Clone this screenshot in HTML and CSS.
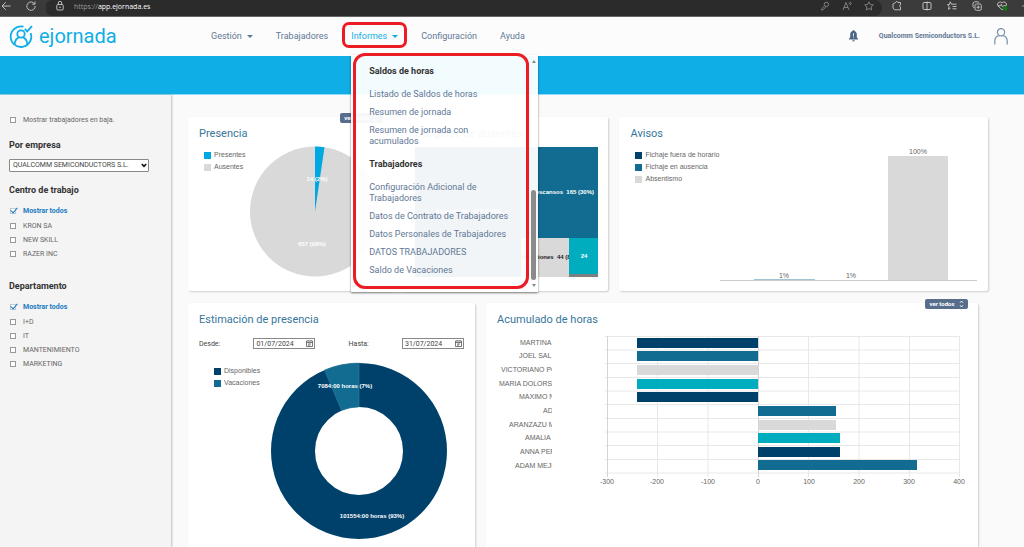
FILE: index.html
```html
<!DOCTYPE html>
<html lang="es">
<head>
<meta charset="utf-8">
<title>ejornada</title>
<link rel="stylesheet" href="styles.css">
</head>
<body>
<div class="browser">
  <div class="browser-nav">
    <svg width="10" height="10" viewBox="0 0 10 10" class="line"><path d="M9.5 5H1M4.8 1.2 1 5l3.8 3.8"/></svg>
    <svg width="10" height="10" viewBox="0 0 10 10" class="line"><path d="M8.6 3A4.2 4.2 0 1 0 9.2 5M9 .5V3.200H6.300"/></svg>
  </div>
  <div class="address">
    <svg width="8" height="10" viewBox="0 0 8 10" class="line"><rect x=".8" y="3.500" width="6.400" height="5.500" rx="1"/><path d="M2.300 3.500V2a1.700 1.700 0 0 1 3.400 0v1.500"/><circle cx="4" cy="6.200" r=".4"/></svg>
    <span class="url"><span class="scheme">https://</span>app.ejornada.es</span>
    <span class="address-icons">
      <svg width="10" height="10" viewBox="0 0 10 10" class="line dim"><path d="M4.300 5.300 1.500 8v1h1.300l3-3"/><circle cx="6.400" cy="3.400" r="2.200"/></svg>
      <svg width="10" height="10" viewBox="0 0 10 10" class="line dim"><path d="M1 9 4 1.500 7 9M2 6.500h4M7 1.500q1 1 0 2M8.300.6q1.600 1.900 0 3.600"/></svg>
      <svg width="10" height="10" viewBox="0 0 10 10" class="line dim"><path d="m5 .8 1.300 2.700 3 .4-2.200 2 .6 3L5 7.500 2.300 8.900l.6-3-2.200-2 3-.4z"/></svg>
    </span>
  </div>
  <div class="browser-tools">
    <svg width="10" height="10" viewBox="0 0 10 10" class="line"><path d="M3.500 1.500a1.300 1.300 0 0 1 2.500 0h2.500v2.300a1.200 1.200 0 0 0 0 2.300V8.800H2.500L1 7V3z"/></svg>
    <span class="tool-sep"></span>
    <svg width="10" height="10" viewBox="0 0 10 10" class="line"><rect x="1" y="1.500" width="8" height="7" rx="1"/><path d="M5 .5v9"/></svg>
    <svg width="10" height="10" viewBox="0 0 10 10" class="line"><path d="M6 3.200 4.300 3.200 3.300.8 2.500 3.400.4 3.600l1.700 1.700-.6 3 2-1.200M6 3.200h3.500M5.500 5.500h4M5.500 7.800h4"/></svg>
    <svg width="10" height="10" viewBox="0 0 10 10" class="line"><rect x="3" y="3" width="6.300" height="6.300" rx="1.500"/><path d="M2.200 7.200 1 5.500V2L2.500.8H6l1.300 1M6.200 4.500v3.300M4.500 6.200h3.400"/></svg>
    <svg width="10" height="10" viewBox="0 0 10 10" class="line"><path d="M5 8.800 1 4.900A2.200 2.200 0 0 1 5 2a2.200 2.200 0 0 1 4 2.900zM.8 4.800h2.400l1-1.500 1.300 2.500.8-1h2.500"/><circle cx="8" cy="7.300" r="2.400" class="ok-dot"/></svg>
    <svg width="8" height="10" viewBox="0 0 8 10" class="solid"><circle cx="1" cy="5" r=".7"/><circle cx="4" cy="5" r=".7"/><circle cx="7" cy="5" r=".7"/></svg>
  </div>
</div>

<header class="header">
  <a class="logo" href="#">
    <svg width="24" height="24" viewBox="0 0 24 24" class="logo-mark"><path d="M14.500 2.700A10.300 10.300 0 1 0 21.600 9"/><circle cx="12" cy="10" r="3.700"/><path d="M5.600 20.300c.4-3.800 2-5.900 4.200-6.900M18.400 20.300c-.4-3.800-2-5.900-4.200-6.900"/><path d="m15.800 5 2.400 2.400L23 2.200"/></svg>
    <span>ejornada</span>
  </a>
  <nav class="nav">
    <div class="nav-item"><a href="#">Gestión <i class="caret"></i></a></div>
    <div class="nav-item"><a href="#">Trabajadores</a></div>
    <div class="nav-item active">
      <a href="#">Informes <i class="caret"></i></a>
      <span class="mark"></span>
      <div class="menu">
        <div class="menu-body">
          <h3>Saldos de horas</h3>
          <ul>
            <li><a href="#">Listado de Saldos de horas</a></li>
            <li><a href="#">Resumen de jornada</a></li>
            <li><a href="#">Resumen de jornada con<br>acumulados</a></li>
          </ul>
          <h3>Trabajadores</h3>
          <ul>
            <li><a href="#">Configuración Adicional de<br>Trabajadores</a></li>
            <li><a href="#">Datos de Contrato de Trabajadores</a></li>
            <li><a href="#">Datos Personales de Trabajadores</a></li>
            <li><a href="#">DATOS TRABAJADORES</a></li>
            <li><a href="#">Saldo de Vacaciones</a></li>
          </ul>
        </div>
        <div class="scroll"><i class="arrow up"></i><i class="track"><b class="thumb"></b></i><i class="arrow down"></i></div>
        <span class="mark menu-mark"></span>
      </div>
    </div>
    <div class="nav-item"><a href="#">Configuración</a></div>
    <div class="nav-item"><a href="#">Ayuda</a></div>
  </nav>
  <div class="account">
    <svg width="9" height="12" viewBox="0 0 9 12" class="bell"><path d="M4.500 0a.9.9 0 0 1 .9.900C7 1.300 7.800 2.600 7.800 4.300v3L9 8.800v.7H0v-.7l1.200-1.500v-3c0-1.700.8-3 2.400-3.400A.9.9 0 0 1 4.500 0zM3.300 10.200h2.400a1.200 1.200 0 0 1-2.400 0z"/><path class="bell-in" d="M4.100 3.200h.9v2.600h-.9zM4.100 6.600h.9v.9h-.9z"/></svg>
    <span class="company">Qualcomm Semiconductors S.L.</span>
    <svg width="14" height="17" viewBox="0 0 14 17" class="user"><circle cx="7" cy="4.300" r="3.600"/><path d="M.8 16.500v-3C.8 10 3 8 5.200 7.700M13.200 16.500v-3c0-3.500-2.200-5.500-4.400-5.800"/></svg>
  </div>
</header>
<div class="band"></div>

<div class="page">
  <aside class="sidebar">
    <label class="check"><input type="checkbox">Mostrar trabajadores en baja.</label>
    <h2><label for="empresa">Por empresa</label></h2>
    <div class="select"><select id="empresa"><option>QUALCOMM SEMICONDUCTORS S.L.</option></select><svg width="6" height="5" viewBox="0 0 6 5"><path d="m.8 1 2.200 2.300L5.200 1"/></svg></div>
    <h2>Centro de trabajo</h2>
    <div class="checks">
      <label class="check all"><input type="checkbox" checked>Mostrar todos</label>
      <label class="check"><input type="checkbox">KRON SA</label>
      <label class="check"><input type="checkbox">NEW SKILL</label>
      <label class="check"><input type="checkbox">RAZER INC</label>
    </div>
    <h2 class="dept">Departamento</h2>
    <div class="checks">
      <label class="check all"><input type="checkbox" checked>Mostrar todos</label>
      <label class="check"><input type="checkbox">I+D</label>
      <label class="check"><input type="checkbox">IT</label>
      <label class="check"><input type="checkbox">MANTENIMIENTO</label>
      <label class="check"><input type="checkbox">MARKETING</label>
    </div>
  </aside>

  <main class="main">
    <div class="row top">
      <section class="card presence">
        <button class="more" type="button">ver todos <svg width="5" height="8" viewBox="0 0 5 8"><path d="M1 2.800 2.500 1 4 2.800M1 5.200 2.500 7 4 5.200"/></svg></button>
        <h2>Presencia</h2>
        <div class="chart">
          <ul class="legend"><li><i class="sky"></i>Presentes</li><li><i class="grey"></i>Ausentes</li></ul>
          <svg width="132" height="131" viewBox="0 0 132 131">
            <circle cx="66" cy="65.500" r="65" class="f-grey"/>
            <path d="M66 65.500V.5a65 65 0 0 1 9.500.7z" class="f-sky"/>
            <text x="68" y="35" class="value">14 (2%)</text>
            <text x="63" y="100" class="value">657 (98%)</text>
          </svg>
        </div>
      </section>
      <section class="card absent">
        <h2>Desglose de ausentes</h2>
        <div class="chart">
          <svg width="183" height="131" viewBox="0 0 183 131">
            <path d="M0 1h106v130H0z" class="f-navy"/>
            <path d="M106 1h77v91h-77z" class="f-teal"/>
            <path d="M106 92h48v39h-48z" class="f-grey"/>
            <path d="M154 92h29v36h-29z" class="f-aqua"/>
            <path d="M154 128h29v3h-29z" class="f-dark"/>
            <text x="53" y="67" class="value">Absentismo&#160; 322 (58%)</text>
            <text x="179" y="48" class="value end">Descansos&#160; 165 (30%)</text>
            <svg x="106" y="92" width="48" height="39"><text x="0" y="21" class="value dark">Vacaciones&#160; 44 (8%)</text></svg>
            <text x="169" y="112" class="value">24</text>
          </svg>
        </div>
      </section>
      <section class="card alerts">
        <h2>Avisos</h2>
        <div class="chart">
          <ul class="legend"><li><i class="navy"></i>Fichaje fuera de horario</li><li><i class="teal"></i>Fichaje en ausencia</li><li><i class="grey"></i>Absentismo</li></ul>
          <svg width="257" height="137" viewBox="0 0 257 137">
            <path d="M168 10h60v124h-60z" class="f-grey"/>
            <path d="M34 133h61v1H34z" class="f-teal pale"/>
            <path d="M0 134.500h257" class="base"/>
            <text x="198" y="8" class="tick">100%</text>
            <text x="64" y="132" class="tick">1%</text>
            <text x="131" y="132" class="tick">1%</text>
          </svg>
        </div>
      </section>
    </div>

    <div class="row bottom">
      <section class="card estimate">
        <h2>Estimación de presencia</h2>
        <div class="dates">
          <label for="desde">Desde:</label>
          <span class="date"><input id="desde" type="text" value="01/07/2024"><svg width="7" height="7" viewBox="0 0 7 7"><path d="M.5 1h6v5.500h-6zM.5 2.500h6M2 4h3M2 5.200h2M2 0v1M5 0v1"/></svg></span>
          <label for="hasta">Hasta:</label>
          <span class="date"><input id="hasta" type="text" value="31/07/2024"><svg width="7" height="7" viewBox="0 0 7 7"><path d="M.5 1h6v5.500h-6zM.5 2.500h6M2 4h3M2 5.200h2M2 0v1M5 0v1"/></svg></span>
        </div>
        <div class="chart">
          <ul class="legend"><li><i class="navy"></i>Disponibles</li><li><i class="teal"></i>Vacaciones</li></ul>
          <svg width="178" height="178" viewBox="0 0 178 178">
            <circle cx="89" cy="89" r="66" class="ring"/>
            <path d="M89 1v44a44 44 0 0 0-17.400 3.600L54.500 8A88 88 0 0 1 89 1z" class="f-teal slice"/>
            <text x="75" y="26" class="value">7084:00 horas (7%)</text>
            <text x="102" y="156" class="value">101554:00 horas (93%)</text>
          </svg>
        </div>
      </section>
      <section class="card hours">
        <button class="more" type="button">ver todos <svg width="5" height="8" viewBox="0 0 5 8"><path d="M1 2.800 2.500 1 4 2.800M1 5.200 2.500 7 4 5.200"/></svg></button>
        <h2>Acumulado de horas</h2>
        <div class="chart">
          <svg width="470" height="156" viewBox="0 0 470 156">
            <path class="grid" d="M108 4.500h354M108 18h354M108 31.500h354M108 45.500h354M108 59h354M108 72.500h354M108 86.500h354M108 100h354M108 113.500h354M108 127.500h354M108 141h354M160.500 4v141M211 4v141M311.500 4v141M362 4v141M412.500 4v141M462.500 4v141"/>
            <path class="grid zero" d="M110.500 4v141M261.500 4v141"/>
            <path class="f-navy" d="M140 6h121v10H140zM140 60h121v10H140zM261 115h82v10h-82z"/>
            <path class="f-teal" d="M140 19h121v10H140zM261 74h78v10h-78zM261 128h159v10H261z"/>
            <path class="f-grey" d="M140 33h121v10H140zM261 88h78v10h-78z"/>
            <path class="f-aqua" d="M140 47h121v10H140zM261 101h82v10h-82z"/>
            <svg x="0" y="0" width="55" height="146" class="names">
              <text x="23" y="13">MARTINA</text>
              <text x="22" y="26">JOEL SAL</text>
              <text x="4" y="40">VICTORIANO PO</text>
              <text x="2" y="54">MARIA DOLORS</text>
              <text x="22" y="67">MAXIMO N</text>
              <text x="46" y="81">AD</text>
              <text x="12" y="95">ARANZAZU M</text>
              <text x="28" y="108">AMALIA</text>
              <text x="23" y="122">ANNA PER</text>
              <text x="18" y="136">ADAM MEJI</text>
            </svg>
            <g class="axis">
              <text x="110" y="152">-300</text><text x="160" y="152">-200</text><text x="211" y="152">-100</text><text x="261" y="152">0</text><text x="312" y="152">100</text><text x="362" y="152">200</text><text x="412" y="152">300</text><text x="462" y="152">400</text>
            </g>
          </svg>
        </div>
      </section>
    </div>
  </main>
</div>
</body>
</html>
```
FILE: styles.css
```css
:root {
  --sky: #10aee6;
  --navy: #00416b;
  --teal: #126b90;
  --aqua: #00adbe;
  --grey: #d9d9d9;
  --slate: #5f7896;
  --red: #ec1c24;
}
* { box-sizing: border-box; }
body {
  margin: 0;
  height: 100vh;
  display: flex;
  flex-direction: column;
  overflow: hidden;
  background: #fafafa;
  color: #666;
  font: 7px/14px Roboto, "Liberation Sans", sans-serif;
}
h2, h3, ul { margin: 0; padding: 0; list-style: none; }
a { color: inherit; text-decoration: none; }
button, input, select { font: inherit; color: inherit; margin: 0; }
svg { display: block; flex: none; }

/* Browser bar */
.browser {
  display: flex;
  height: 17px;
  flex: none;
  background: #3b3b3b;
  border-bottom: 1px solid #666;
  padding-bottom: 3px;
}
.browser-nav { width: 46px; display: flex; gap: 15px; padding: 1px 1px 0; }
.line { fill: none; stroke: #ccc; stroke-width: 0.9; }
.dim { stroke: #888; }
.solid { fill: #ccc; }
.ok-dot { fill: #107c10; stroke: none; }
.address {
  flex: 1;
  height: 16px;
  margin-bottom: -3px;
  display: flex;
  align-items: flex-start;
  padding: 1px 8px 0 10px;
  background: #2b2b2b;
  border-radius: 6px 8px 8px 6px;
}
.url { margin-left: 10px; color: #fff; font: 7px/11px "Open Sans", sans-serif; }
.scheme { color: #999; }
.address-icons { display: flex; gap: 12px; margin-left: auto; }
.browser-tools { width: 142px; display: flex; gap: 15px; padding: 1px 0 0 10px; overflow: hidden; }
.tool-sep { width: 1px; height: 10px; margin: 0 -7px 0 -3px; background: #555; }

/* Header */
.header {
  position: relative;
  z-index: 2;
  display: flex;
  flex: none;
  height: 39px;
  align-items: center;
  padding: 0 16px 1px 9px;
  background: #fcfcfc;
}
.logo { display: flex; align-items: center; gap: 6px; width: 202px; color: var(--sky); font-size: 20px; line-height: 24px; }
.logo-mark { fill: none; stroke: var(--sky); stroke-width: 1.8; }
.nav { display: flex; gap: 23px; height: 100%; font-size: 9px; color: var(--slate); }
.nav-item { position: relative; display: flex; align-items: center; }
.nav-item > a { display: flex; align-items: center; gap: 5px; }
.active > a { color: var(--sky); }
.caret { border: 3px solid transparent; border-top-color: currentColor; border-bottom: 0; }
.mark {
  position: absolute;
  inset: 5px -9px 7px -9px;
  border: 3px solid var(--red);
  border-radius: 7px;
  pointer-events: none;
}
.menu {
  position: absolute;
  top: 100%;
  left: 0;
  width: 187px;
  display: flex;
  background: rgba(255, 255, 255, 0.95);
  box-shadow: 0 1px 2px rgba(0, 0, 0, 0.5);
}
.menu-mark { inset: -2px 9px 3px 2px; border-radius: 12px; }
.menu-body { flex: 1; padding: 11px 0 16px 18px; line-height: 11px; white-space: nowrap; }
.menu-body h3 { font-size: 9px; line-height: 11px; font-weight: 700; color: #333; margin-bottom: 12px; }
.menu-body ul { display: grid; gap: 7px; }
.menu-body ul + h3 { margin-top: 12px; }
.scroll { width: 9px; padding: 5px 2px; display: flex; flex-direction: column; align-items: center; }
.arrow { border: 2px solid transparent; }
.arrow.up { border-bottom: 3px solid #888; border-top: 0; }
.arrow.down { border-top: 3px solid #888; border-bottom: 0; }
.track { flex: 1; display: flex; align-items: flex-end; padding-bottom: 4px; }
.thumb { width: 5px; height: 90px; border-radius: 3px; background: #8b8b8b; }
.account { display: flex; align-items: center; margin-left: auto; }
.bell { fill: #4d6685; }
.bell-in { fill: #fff; }
.company { margin: 0 14px 0 21px; font-weight: 700; color: var(--slate); }
.user { fill: none; stroke: #7890ab; stroke-width: 1.2; }
.band { flex: none; height: 39px; background: var(--sky); border: 1px solid #8fd8f3; border-width: 0 0 1px; }

/* Filters */
.page { flex: 1; display: flex; min-height: 0; }
.sidebar {
  width: 171px;
  flex: none;
  padding: 18px 9px;
  background: #f4f4f4;
  box-shadow: 1px 0 2px rgba(0, 0, 0, 0.25);
}
.sidebar h2 { font-size: 9px; line-height: 12px; font-weight: 700; color: #333; margin: 12px 0 8px; }
.check { display: flex; align-items: center; gap: 7px; height: 14px; padding-left: 1px; }
.check input {
  appearance: none;
  position: relative;
  width: 6px;
  height: 6px;
  border: 1px solid #999;
  background: #fff;
}
.check.all { color: #1b7bc4; font-weight: 700; margin-bottom: 1px; }
.check.all input { border-color: #bcd; }
.check.all input::before {
  content: "";
  position: absolute;
  left: 1px;
  top: -3px;
  width: 3px;
  height: 6px;
  border: solid #1b7bc4;
  border-width: 0 1px 1px 0;
  transform: rotate(42deg);
}
.select { position: relative; width: 140px; }
.select select {
  appearance: none;
  display: block;
  width: 100%;
  height: 13px;
  padding: 0 3px;
  border: 1px solid #888;
  border-radius: 1px;
  background: #fff;
  color: #444;
  line-height: 11px;
}
.select svg { position: absolute; right: 2px; top: 4px; fill: none; stroke: #111; stroke-width: 1.6; }
.sidebar .dept { margin-top: 19px; }

/* Cards */
.main { flex: 1; min-width: 0; padding: 22px 36px 0 17px; display: flex; flex-direction: column; gap: 12px; }
.row { display: grid; gap: 11px; }
.top { flex: none; grid-template-columns: 205fr 205fr 369fr; }
.bottom { flex: 1; padding-right: 10px; grid-template-columns: 287fr 492fr; }
.card {
  position: relative;
  min-width: 0;
  padding: 10px 11px 14px;
  background: #fff;
  border-radius: 2px;
  box-shadow: 1px 1px 2px rgba(0, 0, 0, 0.18);
}
.card h2 { font-size: 11px; line-height: 14px; font-weight: 400; color: #37769c; margin-bottom: 5px; }
.card.alerts { padding-bottom: 8px; }
.chart { display: flex; justify-content: space-between; font-family: "Liberation Sans", Arial, sans-serif; }
.more {
  position: absolute;
  top: -4px;
  right: 10px;
  display: flex;
  align-items: center;
  justify-content: center;
  gap: 4px;
  width: 43px;
  height: 10px;
  padding: 0;
  border: 0;
  border-radius: 2px;
  background: #566d8b;
  color: #fff;
  font-size: 6px;
  line-height: 10px;
  font-weight: 700;
}
.more svg { fill: none; stroke: #fff; stroke-width: 0.9; }
.legend { font-size: 7px; line-height: 12px; padding: 3px 0 0 5px; white-space: nowrap; }
.legend li { display: flex; align-items: center; gap: 3px; }
.legend i { width: 7px; height: 7px; }
.sky { background: #00a8e1; }
.navy { background: var(--navy); }
.teal { background: var(--teal); }
.grey { background: var(--grey); }
.f-sky { fill: #00a8e1; }
.f-navy { fill: var(--navy); }
.f-teal { fill: var(--teal); }
.f-grey { fill: var(--grey); }
.f-aqua { fill: var(--aqua); }
.f-dark { fill: #7f7f7f; }
.pale { opacity: 0.4; }
.base { stroke: #ccc; }
.value { font-size: 6px; font-weight: 700; fill: #fff; text-anchor: middle; }
.value.end { text-anchor: end; }
.value.dark { fill: #222; text-anchor: start; }
.tick { font-size: 7px; fill: #666; text-anchor: middle; }
.presence .chart { padding-right: 1px; }
.estimate .chart { padding: 0 16px 0 10px; }
.ring { fill: none; stroke: var(--navy); stroke-width: 44; }
.slice { stroke: #3d86a6; stroke-width: 0.5; }
.dates { display: flex; align-items: center; justify-content: space-between; height: 11px; margin: 11px 0 13px; color: #444; }
.date { position: relative; width: 62px; }
.date input { display: block; width: 100%; height: 11px; padding: 0 2px; border: 1px solid #888; background: #fff; }
.date svg { position: absolute; right: 2px; top: 2px; fill: none; stroke: #555; stroke-width: 0.8; }
.grid { fill: none; stroke: #e8e8e8; }
.zero { stroke: #d4d4d4; }
.names { font-size: 7px; fill: #666; }
.axis { font-size: 7px; fill: #666; text-anchor: middle; }
```
